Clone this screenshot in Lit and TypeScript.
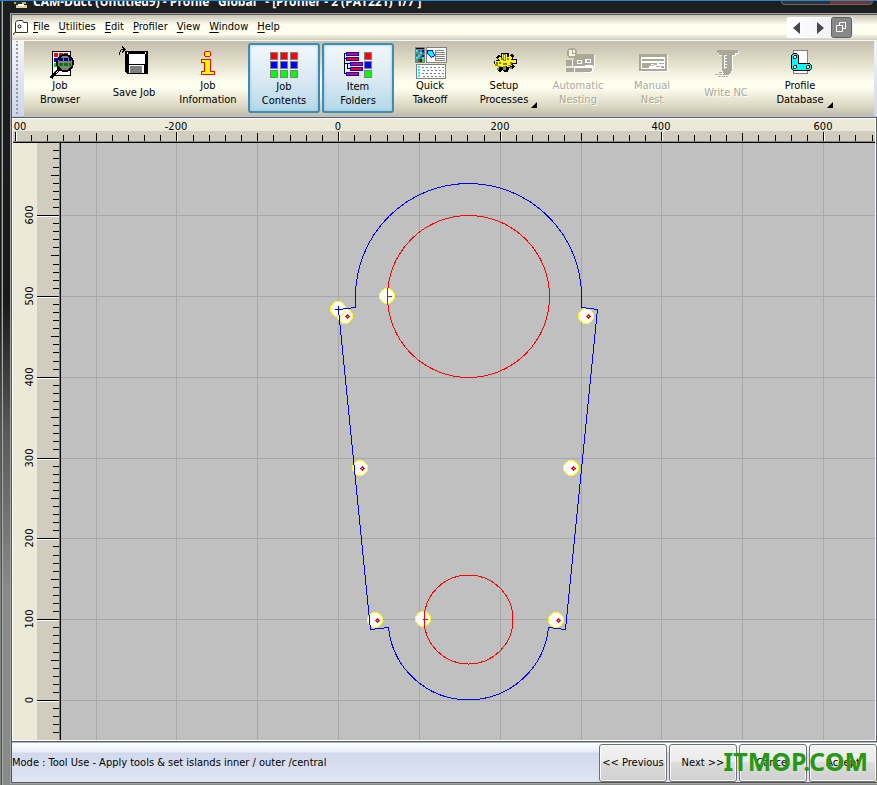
import { LitElement, html, svg, css, nothing, type TemplateResult } from "lit";
import { customElement } from "lit/decorators.js";
import { classMap } from "lit/directives/class-map.js";

/** Pixels per drawing unit. */
const SCALE = 97 / 120;

const range = (from: number, to: number, step: number): number[] => {
  const out: number[] = [];
  for (let v = from; v <= to; v += step) out.push(v);
  return out;
};

const square = (x: number, y: number, c: string) =>
  svg`<rect x=${x} y=${y} width="8" height="8" fill="#808080"/><rect x=${x + 1} y=${y + 1} width="6" height="6" fill=${c}/>`;
const bar = (x: number, y: number) =>
  svg`<rect x=${x} y=${y} width="13" height="4" fill="#00f"/><rect x=${x + 1} y=${y + 1} width="11" height="2" fill="#f00"/>`;

const icons: Record<string, TemplateResult> = {
  browser: svg`
    <rect x="8.5" y="4.5" width="18" height="24" fill="#fff" stroke="#000"/>
    <path d="M10 6h4v4h-4zM15 6h4v4h-4zM20 6h4v4h-4z" fill="#f00"/>
    <path d="M10 11h4v4h-4z" fill="#00f"/><path d="M10 16h4v4h-4z" fill="#0d0"/>
    <circle cx="21" cy="16" r="8" fill="#808080" stroke="#000" stroke-width="2"/>
    <path d="M15 11h4v3h-4zM20 11h4v3h-4zM25 11h2v3h-2z" fill="#000080"/>
    <path d="M15 16h4v3h-4zM20 16h4v3h-4zM25 16h2v3h-2z" fill="#008000"/>
    <path d="M15 22L7 31" stroke="#000" stroke-width="3"/><path d="M12 26l2-2" stroke="#fff"/>`,
  save: svg`
    <path d="M7 4h23v23H9l-2-2z" fill="#000"/><path d="M11 7h16v10H11z" fill="#fff"/><path d="M9 5h1v2H9zM27 5h1v2h-1z" fill="#fff"/>
    <path d="M11 18h15v8H11z" fill="#fff"/><path d="M12 19h12v7H12z" fill="#808080"/>
    <path d="M1.500 8V5.500L3.500 2.500H6M4 -.5L7 2.500L4 5.500" fill="none" stroke="#000"/>`,
  info: svg`
    <circle cx="15.500" cy="7" r="3" fill="#ff0" stroke="#f00"/>
    <path d="M9.500 12.500H18.500V24.500H22.500V27.500H9.500V24.500H12.500V15.500H9.500Z" fill="#ff0" stroke="#f00"/>`,
  contents: svg`${["#f00", "#00f", "#0f0"].map((c, r) => [2, 12, 22].map((x) => square(x, 4 + r * 9, c)))}`,
  folders: svg`
    <path d="M4 5.500H2.500V25.500H4M2.500 15.500H8M5.500 15.500V20.500H8M2.500 10.500H4" fill="none" stroke="#000"/>
    ${bar(4, 4)}${bar(4, 9)}${bar(8, 14)}${bar(8, 19)}${bar(4, 24)}
    ${square(22, 4, "#f00")}${square(22, 13, "#00f")}${square(22, 22, "#0f0")}`,
  takeoff: svg`
    <rect x="1" y="0" width="10" height="16" fill="#808080"/><path d="M2 1h8v1H2z" fill="#000"/>
    <path d="M2 3h2v2H2zM6 5h2v2H6zM4 8h2v2H4zM2 10h2v2H2zM8 10h2v2H8z" fill="#0ff"/>
    <path d="M4 3h2v2H4zM8 5h2v2H8zM2 7h2v2H2zM6 9h2v2H6zM4 12h2v3H4z" fill="#008080"/>
    <path d="M8 3h2v2H8zM8 8h2v2H8z" fill="#00f"/><path d="M6 12h2v3H6z" fill="#800000"/><path d="M8 12h2v3H8z" fill="#0f0"/>
    <rect x="12.500" y=".5" width="20" height="15" fill="#fff" stroke="#808080"/>
    <path d="M13.500 3.500h5l2 5-3 2-4-4z" fill="#0ff" stroke="#00f"/>
    <path d="M22 3.500h8M22 5.500h9M22 7.500h9M22 9.500h9M22 11.500h9M22 13.500h9M21.500 3v11" stroke="#808080"/>
    <rect x="2.500" y="17.500" width="29" height="14" fill="#fff" stroke="#808080"/>
    <path d="M4 19.500h2M4 22.500h2M4 25.500h2M4 28.500h2" stroke="#0ff" stroke-width="2"/>
    <path d="M8 20.500h22M9 23.500h21M8 26.500h22M9 29.500h21" stroke="#808080" stroke-dasharray="2 2"/>`,
  setup: svg`
    <path d="M13 6h8v3l3-2 2 2-1 3h4v5h-4l2 3-3 2-3-1-1 4h-4l-1-3-3 3-3-2 1-3-4-1v-5l4-1-2-3 3-2 2 1z" fill="#000"/>
    <path d="M14 7h5v3l4-1 1 2-2 2h6v3h-5l1 3-4 1-3-1-5 1-3 1-1-2h-2v-2H7v-3h5l-2-3 2-1 2 1z" fill="#ff0"/>
    <path d="M13 11h2v2h-2zM19 11h2v2h-2zM11 15h2v2h-2zM22 15h2v2h-2zM15 16h4v2h-4zM10 19h3v1h-3zM20 18h3v1h-3zM8 15h2v2H8z" fill="#808000"/>
    <path d="M15 7h3v7h-3zM7 17h3v2H7zM9 21h2v2H9zM15 19h3v4h-3zM22 20h2v2h-2z" fill="#808080"/>
    <path d="M16 8h1v5h-1z" fill="#e0e0c0"/>`,
  nesting: svg`
    <path d="M13 8h20v12h-2v6h-8v-2H12v-5H5v-5h8z" fill="#fff"/>
    <path d="M12 7h20v12H12zM4 13h8v6H4zM4 21h8v4H4zM13 21h17v4H13z" fill="#aca899"/>
    <path d="M15 13h5v4h-5zM23 12h6v4h-6z" fill="#fff"/><path d="M16 14h3v2h-3zM25 13h3v2h-3z" fill="#aca899"/>
    <path d="M12 20.500h10M23 18.500h8M10.500 13v8M29 25l3-3" stroke="#fff"/>
    <circle cx="10" cy="6" r="4.500" fill="#f4f2e0" stroke="#aca899" stroke-width="2"/><path d="M10.500 3v3.500H13" fill="none" stroke="#aca899"/>`,
  manual: svg`
    <path d="M4 8h28v17H4z" fill="#fff"/><path d="M3 7h28v17H3z" fill="#aca899"/>
    <path d="M5 10h24v2H5zM5 14h24v2H5zM5 12h1v9H5zM28 12h1v9h-1zM5 21h24v1H5z" fill="#fff"/>
    <path d="M13 19h2v-2h3v1h3v-2h2v1h5v2h-3v2H13z" fill="#fff"/><path d="M16 18h2v1h-2zM20 19h4v1h-4z" fill="#aca899"/>`,
  nc: svg`
    <path d="M8 4h21v3h-3v2h-3v15l-4 6h-3l-4-6V9h-3V7H8z" fill="#fff"/>
    <path d="M7 3h21v3h-3v2h-3v15l-4 7h-2l-4-7V8h-3V6H7z" fill="#aca899"/>
    <path d="M14 8h1v14h-1zM15 8h2v1h-2zM15 11h2v1h-2zM15 14h2v1h-2zM15 17h2v1h-2zM15 20h2v1h-2z" fill="#fff"/>
    <path d="M5 28.500h14M9 30.500h11" stroke="#fff" stroke-dasharray="4 1"/>
    <path d="M5 27.500h11M8 29.500h10M9 25.500h3" stroke="#aca899" stroke-dasharray="3 1"/>`,
  profile: svg`
    <rect x="9.500" y="3.500" width="14" height="23" fill="#fff" stroke="#808080"/>
    <path d="M9.500 6.500H12.500L14.500 8.500V16.500H25.500L27.500 18.500V21.500L25.500 23.500H9.500L7.500 21.500V8.500Z" fill="#0ff" stroke="#000"/>
    <circle cx="11" cy="10" r="1.500" fill="#fff" stroke="#000"/><circle cx="11" cy="20" r="1.500" fill="#fff" stroke="#000"/><circle cx="24" cy="20" r="1.500" fill="#fff" stroke="#000"/>`,
};

interface Tool {
  icon: string;
  lines: string[];
  pressed?: boolean;
  disabled?: boolean;
  menu?: boolean;
}

const tools: Tool[] = [
  { icon: "browser", lines: ["Job", "Browser"] },
  { icon: "save", lines: ["Save Job"] },
  { icon: "info", lines: ["Job", "Information"] },
  { icon: "contents", lines: ["Job", "Contents"], pressed: true },
  { icon: "folders", lines: ["Item", "Folders"], pressed: true },
  { icon: "takeoff", lines: ["Quick", "Takeoff"] },
  { icon: "setup", lines: ["Setup", "Processes"], menu: true },
  { icon: "nesting", lines: ["Automatic", "Nesting"], disabled: true },
  { icon: "manual", lines: ["Manual", "Nest"], disabled: true },
  { icon: "nc", lines: ["Write NC"], disabled: true },
  { icon: "profile", lines: ["Profile", "Database"], menu: true },
];

@customElement("tool-bar")
export class ToolBar extends LitElement {
  static styles = css`
    :host {
      display: flex;
      flex: none;
      height: 76px;
      background: linear-gradient(#f4f6fc, #ccd6ee);
      border-bottom: 1px solid #b8c4dc;
      box-sizing: border-box;
    }
    .grip {
      width: 12px;
      flex: none;
      background: radial-gradient(circle at 1px 1px, #a09c90 1px, transparent 1px) 4px 3px / 12px 4px;
    }
    .panel {
      flex: 1;
      display: flex;
      gap: 2px;
      padding: 2px 2px 0;
      margin-right: 3px;
      overflow: hidden;
      background: linear-gradient(#c2beac, #dedac6 25%, #fffff0 55%, #fffff0 62%, #dedac6 85%, #c0bcaa);
    }
    button {
      position: relative;
      flex: none;
      width: 72px;
      height: 70px;
      box-sizing: border-box;
      padding: 2px 4px 0 0;
      border: 2px solid transparent;
      border-radius: 3px;
      background: none;
      font: inherit;
      line-height: 14px;
      color: #000;
      display: flex;
      flex-direction: column;
      align-items: center;
    }
    button:disabled {
      color: #aca899;
      text-shadow: 1px 1px #fff;
    }
    .pressed {
      padding: 3px 0 0;
      border-color: #3c8cb4;
      background: linear-gradient(#f2f8fc, #dceaf4 50%, #b4d8e8);
      box-shadow: inset 0 0 3px #8cc4dc;
    }
    svg {
      width: 32px;
      height: 32px;
      flex: none;
      overflow: visible;
    }
    .label {
      height: 28px;
      display: flex;
      flex-direction: column;
      justify-content: center;
      white-space: nowrap;
    }
    .drop {
      position: absolute;
      right: 3px;
      bottom: 3px;
      border: 3px solid transparent;
      border-right-color: #000;
      border-bottom-color: #000;
    }
  `;

  render() {
    return html`<div class="grip"></div>
      <div class="panel">
        ${tools.map(
          (t) => html`<button
            class=${classMap({ pressed: !!t.pressed })}
            ?disabled=${t.disabled}
            aria-pressed=${t.pressed ? "true" : nothing}
          >
            <svg shape-rendering="crispEdges" aria-hidden="true">${icons[t.icon]}</svg>
            <span class="label">${t.lines.map((l) => html`<span>${l}</span>`)}</span>
            ${t.menu ? html`<span class="drop"></span>` : nothing}
          </button>`,
        )}
      </div>`;
  }
}

/** Drawing canvas with a ruler along the top and the left side. */
@customElement("profile-view")
export class ProfileView extends LitElement {
  static styles = css`
    :host {
      display: grid;
      grid-template: 24px 1fr / 48px 1fr;
      min-height: 0;
      min-width: 0;
      overflow: hidden;
      background: #c0c0c0;
    }
    svg {
      display: block;
      width: 100%;
      height: 100%;
      min-height: 0;
      min-width: 0;
      overflow: hidden;
    }
    .top {
      grid-column: 1 / -1;
      background: linear-gradient(#ece9d8 12px, #d0ccbe 12px, #d0ccbe 22px, #88867c 22px, #88867c 23px, #000 23px);
    }
    .left {
      background: linear-gradient(90deg, #ece9d8 24px, #d0ccbe 24px, #d0ccbe 46px, #88867c 46px, #88867c 47px, #000 47px);
    }
    text {
      font-size: 11px;
      text-anchor: middle;
    }
    .grid {
      stroke: #a8a8a8;
    }
    .cut {
      fill: none;
      stroke: #0000f0;
    }
    .hole {
      fill: none;
      stroke: #f00;
    }
    .rim {
      fill: #ff0;
    }
    .pin {
      fill: #fff;
    }
    .dot {
      fill: #f00;
    }
  `;

  private topRuler() {
    const at = (u: number) => Math.round(325 + u * SCALE);
    return svg`${range(-400, 2000, 20).map((u) => {
      const x = at(u);
      const major = u % 200 === 0;
      const y = major ? 13 : u % 100 === 0 ? 14 : 16;
      return svg`<rect x=${x} y=${y} width="1" height=${22 - y}/>
        ${major ? svg`<rect x=${x + 1} y="13" width="1" height="9" fill="#fff"/><text x=${x} y="11">${u}</text>` : nothing}`;
    })}`;
  }

  private leftRuler() {
    const at = (u: number) => Math.round(557 - u * SCALE);
    return svg`${range(-1200, 690, 10).map((u) => {
      const y = at(u);
      const major = u % 100 === 0;
      const x = major ? 24 : u % 50 === 0 ? 38 : 40;
      return svg`<rect x=${x} y=${y} width=${46 - x} height="1"/>
        ${major ? svg`<rect x="24" y=${y + 1} width="22" height="1" fill="#fff"/><text transform="translate(20 ${y}) rotate(-90)">${u}</text>` : nothing}`;
    })}`;
  }

  private pin(x: number, y: number, dot = false) {
    return svg`<circle class="rim" cx=${x} cy=${y} r="8"/><circle class="pin" cx=${x} cy=${y} r="7"/>
      ${dot
        ? svg`<path class="dot" d="M${x} ${y}h5v1h-5zM${x + 2} ${y - 2}h1v5h-1zM${x + 1} ${y - 1}h3v3h-3z"/>
          <rect class="pin" x=${x + 2} y=${y} width="1" height="1"/>`
        : nothing}`;
  }

  render() {
    const dots = [[284, 173], [525, 173], [299, 325], [510, 325], [314, 477], [495, 477]];
    return html`
      <svg class="top" shape-rendering="crispEdges">${this.topRuler()}</svg>
      <svg class="left" shape-rendering="crispEdges">${this.leftRuler()}</svg>
      <svg class="canvas" shape-rendering="crispEdges">
        ${range(-300, 2000, 100).map((u) => {
          const x = Math.round(277 + u * SCALE) + 0.5;
          return svg`<line class="grid" x1=${x} x2=${x} y1="0" y2="100%"/>`;
        })}
        ${range(-1200, 600, 100).map((u) => {
          const y = Math.round(557 - u * SCALE) + 0.5;
          return svg`<line class="grid" x1="0" x2="100%" y1=${y} y2=${y}/>`;
        })}
        ${dots.map(([x, y]) => this.pin(x, y, true))}
        ${this.pin(277, 166)}${this.pin(326, 153)}${this.pin(362, 476)}
        <circle class="hole" cx="407.5" cy="153.5" r="81"/>
        <circle class="hole" cx="407.5" cy="476.5" r="44.5"/>
        <path class="hole" d="M327 153.500h4M363 476.500h4"/>
        <path class="cut" d="M274 166.500h7M277.500 163v7"/>
        <path class="cut" d="M277.500 166.500L294.500 164.500V153.500A113 113 0 0 1 520.500 153.500V164.500L536.500 166.500L504.500 486.500L487.500 484.500A80.400 80.400 0 0 1 327.500 484.500L309.500 486.500Z"/>
      </svg>
    `;
  }
}

const menus = ["File", "Utilities", "Edit", "Profiler", "View", "Window", "Help"];
const steps = ["<< Previous", "Next >>", "Cancel", "Accept"];

@customElement("app-root")
export class AppRoot extends LitElement {
  static styles = css`
    :host {
      display: flex;
      flex-direction: column;
      position: relative;
      height: 100vh;
      overflow: hidden;
      box-sizing: border-box;
      border-top: 1px solid #2488d0;
      font: 11px "DejaVu Sans Condensed", "DejaVu Sans", sans-serif;
      color: #000;
      background: linear-gradient(#1c1e20, #181818 38%, #585a58 55%, #888a88 75%);
    }
    .title {
      flex: none;
      height: 12px;
      display: flex;
      align-items: flex-end;
      gap: 6px;
      padding: 0 4px 5px 14px;
      box-sizing: border-box;
      overflow: hidden;
      color: #fff;
      font: bold 12px/12px "Open Sans", sans-serif;
      white-space: pre;
    }
    .title svg {
      width: 13px;
      height: 6px;
    }
    .caption {
      align-self: flex-start;
      margin-left: auto;
      width: 90px;
      height: 3px;
      border: 1px solid #66686a;
      border-top: 0;
      border-radius: 0 0 4px 4px;
      background: linear-gradient(90deg, #303234 48px, #7c3424 48px);
    }
    .frame {
      flex: 1;
      min-height: 0;
      display: flex;
      flex-direction: column;
      margin: 0 0 1px 10px;
      border: 1px solid #a4a4a4;
      border-right: 0;
    }
    .inner {
      flex: 1;
      min-height: 0;
      display: flex;
      flex-direction: column;
      border: 1px solid #58585c;
      border-right: 0;
    }
    .edge {
      position: absolute;
      left: 1px;
      top: 0;
      bottom: 0;
      width: 1px;
      border-right: 1px solid #a8b0ac;
      background: #484c4c;
    }
    .menu {
      flex: none;
      height: 26px;
      display: flex;
      align-items: center;
      box-sizing: border-box;
      padding-bottom: 1px;
      border-bottom: 1px solid #f4f6fc;
      background: linear-gradient(#c8c4b2, #fffff0 40%, #fffff0 75%, #d0ccba);
    }
    .menu button {
      padding: 0;
      margin-right: 9px;
      border: 0;
      background: none;
      font: inherit;
      line-height: 14px;
    }
    .menu u {
      text-underline-offset: 2px;
    }
    .menu > svg {
      width: 16px;
      height: 16px;
      margin-right: 5px;
    }
    .mdi {
      display: flex;
      margin-left: auto;
      margin-right: 24px;
      background: linear-gradient(90deg, #fff, #ececf4);
    }
    .menu .mdi button {
      margin: 0;
      height: 21px;
      width: 22px;
    }
    .mdi svg {
      display: block;
      width: 22px;
      height: 21px;
    }
    .work {
      flex: 1;
      min-height: 0;
      display: grid;
      border: 1px solid #5c5c64;
      border-left: 0;
      background: #fff;
      padding: 1px;
    }
    .status {
      flex: none;
      height: 40px;
      display: flex;
      align-items: center;
      box-sizing: border-box;
      background: linear-gradient(#a8bcd0 1px, #fff 1px, #e8ecf8 10px, #d2d9ec 11px, #dfe5f4);
    }
    .mode {
      flex: 1;
      white-space: nowrap;
    }
    .steps {
      display: flex;
      gap: 2px;
      padding-top: 1px;
    }
    .steps button {
      width: 68px;
      height: 38px;
      padding: 0;
      border: 1px solid #707070;
      border-radius: 3px;
      font: inherit;
      box-shadow: inset 0 0 0 1px #fcfcfc;
      background: linear-gradient(#f2f2f2, #ebebeb 45%, #dcdcdc 50%, #cfcfcf);
    }
    .mark {
      position: absolute;
      right: 9px;
      bottom: 7px;
      color: #249a14;
      font: bold 25px/34px "Noto Sans", sans-serif;
      pointer-events: none;
    }
  `;

  render() {
    return html`
      <div class="edge"></div>
      <div class="title">
        <svg shape-rendering="crispEdges" aria-hidden="true"><path d="M0 0h12v2H0z" fill="#c8b040"/><path d="M2 0h6v2H2z" fill="#303030"/><path d="M2 3h11v3H2z" fill="#d8d4a0"/><path d="M4 2h6v2H4z" fill="#fff"/></svg>
        <span>CAM-Duct (Untitled9) - Profile "Global" - [Profiler - 2 (PAT221) 1/7 ]</span>
        <div class="caption"></div>
      </div>
      <div class="frame">
        <div class="inner">
          <nav class="menu">
            <svg aria-hidden="true"><path d="M3.500 13.500V3.500Q4 1.500 6.500 1.500H10.500L11.500 3.500H15.500V13.500H3.500Q1.500 13.500 1.500 16" fill="#fff" stroke="#303030"/><circle cx="7.500" cy="7.500" r="1.500" fill="none" stroke="#000"/></svg>
            ${menus.map((m) => html`<button><u>${m[0]}</u>${m.slice(1)}</button>`)}
            <div class="mdi">
              <button aria-label="Previous window"><svg><path d="M13 5v12L6 11z" fill="#484848"/></svg></button>
              <button aria-label="Next window"><svg><path d="M8 5v12L15 11z" fill="#484848"/></svg></button>
              <button aria-label="Restore"><svg><rect x=".5" y=".5" width="20" height="20" rx="2" fill="#888" stroke="#606060"/><path d="M8.500 8V5.500H14.500V11.500H12M5.500 8.500H11.500V14.500H5.500Z" fill="none" stroke="#fff"/></svg></button>
            </div>
          </nav>
          <tool-bar></tool-bar>
          <div class="work"><profile-view></profile-view></div>
          <footer class="status">
            <span class="mode">Mode : Tool Use - Apply tools &amp; set islands inner / outer /central</span>
            <div class="steps">${steps.map((s) => html`<button>${s}</button>`)}</div>
          </footer>
        </div>
      </div>
      <div class="mark">ITMOP.COM</div>
    `;
  }
}
